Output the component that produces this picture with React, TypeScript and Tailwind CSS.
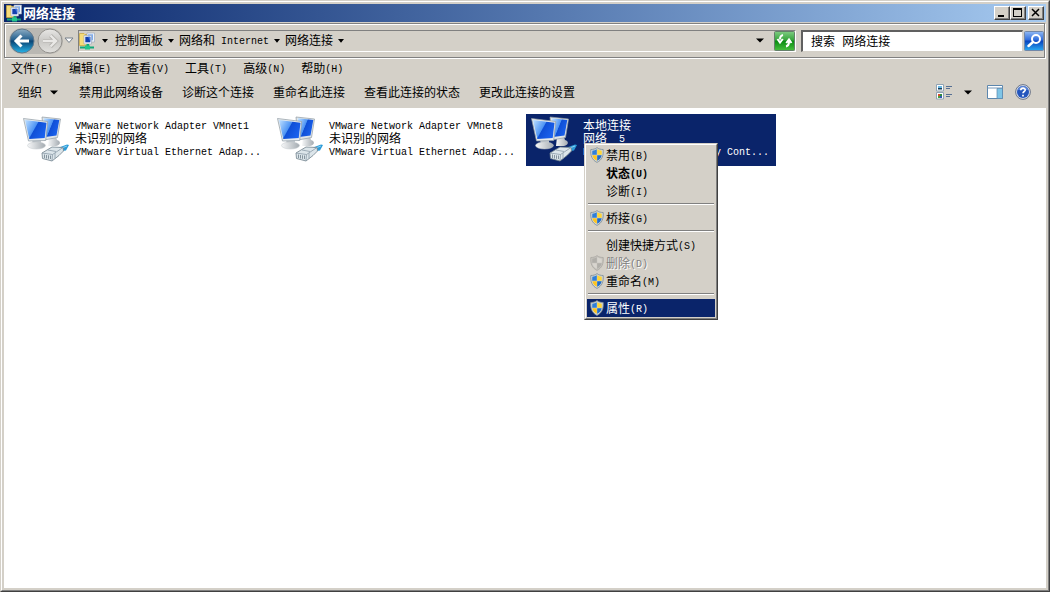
import React from 'react'

const menus = ['文件(F)', '编辑(E)', '查看(V)', '工具(T)', '高级(N)', '帮助(H)']
const commands = [
  '禁用此网络设备',
  '诊断这个连接',
  '重命名此连接',
  '查看此连接的状态',
  '更改此连接的设置',
]
const crumbs = ['控制面板', '网络和 Internet', '网络连接']
const adapters = [
  {
    name: 'VMware Network Adapter VMnet1',
    status: '未识别的网络',
    device: 'VMware Virtual Ethernet Adap...',
  },
  {
    name: 'VMware Network Adapter VMnet8',
    status: '未识别的网络',
    device: 'VMware Virtual Ethernet Adap...',
  },
  {
    name: '本地连接',
    status: '网络  5',
    device: 'Realtek PCIe GBE Family Cont...',
    selected: true,
  },
]
const contextMenu = [
  [
    { label: '禁用(B)', shield: true },
    { label: '状态(U)', bold: true },
    { label: '诊断(I)' },
  ],
  [{ label: '桥接(G)', shield: true }],
  [
    { label: '创建快捷方式(S)' },
    { label: '删除(D)', shield: true, disabled: true },
    { label: '重命名(M)', shield: true },
  ],
  [{ label: '属性(R)', shield: true, active: true }],
]

// Latin runs are half as wide as a Chinese character
const Label = ({ text }: { text: string }) => (
  <>
    {text.split(/([\x20-\x7e]+)/).map((part, i) =>
      i % 2 ? (
        <span
          key={i}
          className="align-[1px] whitespace-pre font-['Liberation_Mono',monospace] text-[10px] leading-none"
        >
          {part}
        </span>
      ) : (
        part
      ),
    )}
  </>
)

const SmallArrow = () => (
  <svg width="6" height="4" viewBox="0 0 6 4" className="shrink-0">
    <path d="M0 0h6L3 3.8z" />
  </svg>
)
const Arrow = () => (
  <svg width="8" height="5" viewBox="0 0 8 5" className="shrink-0">
    <path d="M0 0.5h8L4 4.5z" />
  </svg>
)

const FolderIcon = () => (
  <svg width="16" height="18" viewBox="0 0 16 18" className="shrink-0">
    <path d="M0.500 1.500h4.500l1 1h4v11H0.500z" fill="#f5dc7a" stroke="#c9a53c" strokeWidth="0.7" />
    <path d="M8 1h7.500v9H8z" fill="#eef3f8" stroke="#93a3b8" strokeWidth="0.6" />
    <path d="M9 2.300h5v6H9z" fill="#7dabef" />
    <path d="M5 3.500h7.500v8.500H5z" fill="#f5f8fc" stroke="#93a3b8" strokeWidth="0.6" />
    <path d="M6.300 4.800h5v5.500h-5z" fill="#123fae" />
    <path d="M9 4.800h2.300v5z" fill="#3c74de" />
    <path d="M7.500 12h2.500v2.500H15v2H1v-2h6.500z" fill="#13a878" />
    <path d="M6 13.500h5v4H6z" fill="#24c58d" />
  </svg>
)

const ShieldIcon = ({ disabled }: { disabled?: boolean }) => (
  <svg width="14" height="16" viewBox="0 0 14 16" className="shrink-0">
    <path
      d="M7 0.600C5.500 2 3 2.500 0.800 2.500C0.300 8.500 2 13 7 15.400C12 13 13.700 8.500 13.200 2.500C11 2.500 8.500 2 7 0.600z"
      fill={disabled ? '#c6c3bd' : '#cfd5d8'}
      stroke={disabled ? '#aaa7a2' : '#7c8a92'}
      strokeWidth="0.8"
    />
    <path d="M6.800 2.300C5.500 3.200 4 3.700 2.300 3.800L2.200 7.800h4.600z" fill={disabled ? '#b0aea9' : '#2f7fd8'} />
    <path d="M7.200 2.300C8.500 3.200 10 3.700 11.700 3.800L11.800 7.800H7.200z" fill={disabled ? '#d8d5cf' : '#ffd536'} />
    <path d="M2.300 8.200h4.500v5.500C4.300 12.500 2.800 10.700 2.300 8.200z" fill={disabled ? '#d8d5cf' : '#ffc51d'} />
    <path d="M11.700 8.200H7.200v5.500C9.700 12.500 11.200 10.700 11.700 8.200z" fill={disabled ? '#b0aea9' : '#1f6cc8'} />
  </svg>
)

const AdapterIcon = () => (
  <svg width="48" height="48" viewBox="0 0 48 48" className="shrink-0">
    <defs>
      <linearGradient id="screen" x1="0" y1="0.1" x2="1" y2="0.6">
        <stop offset="0" stopColor="#b9dcff" />
        <stop offset="0.48" stopColor="#4d94f4" />
        <stop offset="0.52" stopColor="#0f4fd6" />
        <stop offset="1" stopColor="#1b62ee" />
      </linearGradient>
      <linearGradient id="stand" x1="0" y1="0" x2="1" y2="0">
        <stop offset="0" stopColor="#f6f7f8" />
        <stop offset="1" stopColor="#a4abb1" />
      </linearGradient>
    </defs>
    <path d="M27 21h7l1 3c4 1 4 5-1 6h-8z" fill="url(#stand)" />
    <path d="M20 1L38.500 3L35.500 21.500L22 24z" fill="#dfe5e9" stroke="#8f9ba4" strokeWidth="0.7" />
    <path d="M22 2.200L37.300 4L34.500 19.500L23 21z" fill="url(#screen)" />
    <path d="M10 24l9-1v5h-8z" fill="#c3c9ce" />
    <ellipse cx="14.500" cy="29.500" rx="9" ry="3.500" fill="url(#stand)" stroke="#c3c8cc" strokeWidth="0.5" />
    <path d="M1.500 2.500L25.700 5.500L23.700 24.500L6.500 25z" fill="#e6ebee" stroke="#8f9ba4" strokeWidth="0.7" />
    <path d="M3 3.900L24.500 6.700L22.700 22L7.300 23z" fill="url(#screen)" />
    <path d="M37 31.500L45 28.500L47 29L44 34.500L40 35z" fill="#2c9bd8" />
    <path d="M37 33L45 30" stroke="#8ad3f4" />
    <path d="M20 37L30 31L41 31.500L41.500 35L37 39.500L30 45L20.500 42.500z" fill="#dce5ea" stroke="#71818c" strokeWidth="0.8" />
    <path d="M20 37L30.500 38.500L41 31.500M30.500 38.500L30 45M33 37v5.500M26 34l8 1.500" fill="none" stroke="#8b9ca8" strokeWidth="0.8" />
    <path d="M22.500 38.500v3.500M24.500 39v3.500M26.500 39.300v3.500M28.500 39.500v3.500" stroke="#6f7f8a" strokeWidth="0.8" />
  </svg>
)

const raised =
  'border border-t-white border-l-white border-r-[#404040] border-b-[#404040] shadow-[inset_-1px_-1px_0_#808080]'

const TitleBar = () => (
  <header className="flex h-[18px] items-center bg-linear-to-r from-[#0a246a] to-[#a6caf0] px-[2px]">
    <FolderIcon />
    <h1 className="flex-1 pl-px text-[13px] leading-[18px] font-bold text-white">网络连接</h1>
    <div className="flex">
      <button aria-label="最小化" className={`h-[14px] w-[16px] bg-[#d4d0c8] ${raised}`}>
        <svg width="14" height="12" viewBox="0 0 14 12">
          <path d="M3 8h6v2H3z" />
        </svg>
      </button>
      <button aria-label="最大化" className={`h-[14px] w-[16px] bg-[#d4d0c8] ${raised}`}>
        <svg width="14" height="12" viewBox="0 0 14 12">
          <path d="M2 1h9v9H2zM3 3v6h7V3z" fillRule="evenodd" />
        </svg>
      </button>
      <button aria-label="关闭" className={`ml-[2px] h-[14px] w-[16px] bg-[#d4d0c8] ${raised}`}>
        <svg width="14" height="12" viewBox="0 0 14 12">
          <path d="M3 2l7 7M10 2L3 9" stroke="#000" strokeWidth="1.5" />
        </svg>
      </button>
    </div>
  </header>
)

const NavButtons = () => (
  <div className="flex shrink-0 items-center">
    <div className="flex gap-[2px] rounded-full bg-[#bab8b3]">
      <button aria-label="后退">
        <svg width="26" height="26" viewBox="0 0 26 26">
          <defs>
            <linearGradient id="back" x1="0" y1="0" x2="0" y2="1">
              <stop offset="0" stopColor="#8dadc4" />
              <stop offset="0.45" stopColor="#245f8d" />
              <stop offset="0.5" stopColor="#0b4474" />
              <stop offset="1" stopColor="#27b5ea" />
            </linearGradient>
          </defs>
          <circle cx="13" cy="13" r="12" fill="url(#back)" stroke="#63788a" strokeWidth="1" />
          <path d="M20 13H7M12.500 7.500L7 13l5.500 5.500" fill="none" stroke="#fff" strokeWidth="3" />
        </svg>
      </button>
      <button aria-label="前进" disabled>
        <svg width="26" height="26" viewBox="0 0 26 26">
          <defs>
            <linearGradient id="forward" x1="0" y1="0" x2="0" y2="1">
              <stop offset="0" stopColor="#e8e7e5" />
              <stop offset="0.5" stopColor="#c9c8c5" />
              <stop offset="1" stopColor="#e2e1de" />
            </linearGradient>
          </defs>
          <circle cx="13" cy="13" r="12" fill="url(#forward)" stroke="#93918d" strokeWidth="1" />
          <path d="M6 13h13M13.500 7.500L19 13l-5.500 5.500" fill="none" stroke="#b2b0ac" strokeWidth="4" />
          <path d="M6 13h13M13.500 7.500L19 13l-5.500 5.500" fill="none" stroke="#e9e8e6" strokeWidth="2.400" />
        </svg>
      </button>
    </div>
    <button aria-label="最近的页面" className="pl-px">
      <svg width="10" height="7" viewBox="0 0 10 7">
        <path d="M1 1h8L5 5.500z" fill="#fff" stroke="#77808a" />
      </svg>
    </button>
  </div>
)

const AddressBar = () => (
  <nav className="mr-px flex h-[35px] items-center border border-[#808080] pl-1 shadow-[1px_1px_0_#fff,inset_1px_1px_0_#fff]">
    <NavButtons />
    <div className="ml-1 flex h-[22px] min-w-0 flex-1 items-center border border-t-[#808080] border-r-white border-b-white border-l-[#808080]">
      <FolderIcon />
      <button aria-label="位置" className="px-[7px]">
        <SmallArrow />
      </button>
      {crumbs.map((crumb) => (
        <React.Fragment key={crumb}>
          <a href="#" className="pb-[2px] whitespace-nowrap">
            <Label text={crumb} />
          </a>
          <button aria-label={`${crumb} 子项`} className="px-[5px]">
            <SmallArrow />
          </button>
        </React.Fragment>
      ))}
      <button aria-label="历史记录" className="mr-[10px] ml-auto">
        <Arrow />
      </button>
      <button aria-label="刷新">
        <svg width="21" height="20" viewBox="0 0 21 20">
          <defs>
            <linearGradient id="refresh" x1="0" y1="0" x2="0" y2="1">
              <stop offset="0" stopColor="#7fcc83" />
              <stop offset="0.45" stopColor="#35a53b" />
              <stop offset="0.5" stopColor="#078a10" />
              <stop offset="1" stopColor="#48c13e" />
            </linearGradient>
          </defs>
          <rect x="0.5" y="0.5" width="20" height="19" rx="1" fill="url(#refresh)" stroke="#64806a" />
          <path d="M9 4C6.500 4.500 6 6 6 8.500M3.500 8L6 11.500L8.800 8M12 15.500C14.500 15 15 13.500 15 11M12.200 12L15 8.500L17.500 12" fill="none" stroke="#fff" strokeWidth="2" />
        </svg>
      </button>
    </div>
    <form className="ml-[5px] flex w-[243px] items-center gap-px">
      <input
        type="text"
        aria-label="搜索"
        defaultValue="搜索 网络连接"
        className="h-[22px] min-w-0 flex-1 border-t-2 border-r border-b border-l-2 border-t-[#606060] border-r-[#d4d0c8] border-b-[#d4d0c8] border-l-[#606060] bg-white pb-px pl-[8px] font-['Liberation_Mono','Noto_Sans_CJK_SC',monospace] outline-none"
      />
      <button type="button" aria-label="开始搜索">
        <svg width="20" height="20" viewBox="0 0 20 20">
          <defs>
            <linearGradient id="search" x1="0" y1="0" x2="0" y2="1">
              <stop offset="0" stopColor="#91b9f3" />
              <stop offset="0.45" stopColor="#2c6bdc" />
              <stop offset="0.5" stopColor="#0742bd" />
              <stop offset="1" stopColor="#2aaaf2" />
            </linearGradient>
          </defs>
          <rect x="0.5" y="0.500" width="19" height="19" rx="1" fill="url(#search)" stroke="#7187a8" />
          <circle cx="12" cy="8" r="4" fill="none" stroke="#fff" strokeWidth="2" />
          <path d="M9 11l-4.500 4" stroke="#fff" strokeWidth="2.500" strokeLinecap="round" />
        </svg>
      </button>
    </form>
  </nav>
)

const Toolbar = () => (
  <div className="flex h-[30px] items-center gap-[19px] pr-[15px] pb-[2px] pl-[14px]">
    <button className="flex items-center gap-[8px] pr-[2px] whitespace-nowrap">
      组织
      <Arrow />
    </button>
    {commands.map((command) => (
      <button key={command} className="whitespace-nowrap">
        {command}
      </button>
    ))}
    <div className="ml-auto flex items-center">
      <button aria-label="更改视图">
        <svg width="16" height="16" viewBox="0 0 16 16">
          <path d="M0.500 0.500h7v6.500h-7zM0.500 8.500h7V15h-7z" fill="#fff" stroke="#8fa3b5" />
          <path d="M2 2h4v3H2z" fill="#67b7e4" />
          <path d="M2 4h4v1.500H2z" fill="#173c58" />
          <path d="M2 10h2v2H2z" fill="#d84c2b" />
          <path d="M4 10h2v2H4z" fill="#2d8b3d" />
          <path d="M2 12h2v2H2z" fill="#46a33e" />
          <path d="M4 12h2v2H4z" fill="#3157b4" />
          <path d="M10 2.500h6M10 4.500h4M10 10.500h6M10 12.500h4" stroke="#556f94" />
        </svg>
      </button>
      <button aria-label="更多选项" className="px-3">
        <Arrow />
      </button>
      <button aria-label="预览窗格" className="ml-[3px]">
        <svg width="16" height="14" viewBox="0 0 16 14">
          <path d="M0.500 0.500h15v13H0.500z" fill="#fff" stroke="#5c86ad" />
          <path d="M0.500 3h15" stroke="#7798b8" />
          <path d="M10 3.500h5.500v10H10z" fill="#7fc5e6" stroke="#5c86ad" strokeWidth="0.700" />
        </svg>
      </button>
      <button aria-label="帮助" className="ml-3">
        <svg width="16" height="16" viewBox="0 0 16 16">
          <circle cx="8" cy="8" r="7.400" fill="#d3dcec" stroke="#6d7587" />
          <circle cx="8" cy="8" r="6" fill="#2355bd" />
          <path d="M3 6a5 4 0 0 1 10 0z" fill="#5b84d6" />
          <path d="M5.800 6.300C5.800 3.400 10.300 3.500 10.200 6C10.100 7.500 8 7.600 8 9.300M8 10.800v1.700" fill="none" stroke="#fff" strokeWidth="1.700" />
        </svg>
      </button>
    </div>
  </div>
)

const ContextMenu = () => (
  <div
    role="menu"
    className="absolute top-[29px] left-[58px] z-10 w-[134px] border border-t-[#d4d0c8] border-r-[#404040] border-b-[#404040] border-l-[#d4d0c8] bg-[#d4d0c8] text-black"
  >
    <div className="border border-t-white border-r-[#808080] border-b-[#808080] border-l-white p-px">
      {contextMenu.map((group, i) => (
        <div key={i}>
          {i > 0 && (
            <div className="px-px pt-[3px] pb-[5px]">
              <hr className="h-px border-t border-[#808080] shadow-[0_1px_0_#fff]" />
            </div>
          )}
          {group.map((item) => (
            <button
              key={item.label}
              role="menuitem"
              disabled={item.disabled}
              className={`flex h-[18px] w-full items-center pl-[3px] leading-[18px] ${
                item.active ? 'bg-[#0a246a] text-white' : ''
              } ${item.bold ? 'font-bold' : ''} ${
                item.disabled ? 'text-[#808080] [text-shadow:1px_1px_0_#fff]' : ''
              }`}
            >
              <span className="flex w-[16px] shrink-0">
                {item.shield && <ShieldIcon disabled={item.disabled} />}
              </span>
              <span className="whitespace-nowrap">
                <Label text={item.label} />
              </span>
            </button>
          ))}
        </div>
      ))}
    </div>
  </div>
)

export default function App() {
  return (
    <div className="flex min-h-screen flex-col border border-t-[#d4d0c8] border-r-[#404040] border-b-[#404040] border-l-[#d4d0c8] bg-[#d4d0c8] font-['Noto_Sans_CJK_SC',sans-serif] text-[12px] leading-[16px] text-black">
      <div className="flex flex-1 flex-col border border-t-white border-r-[#808080] border-b-[#808080] border-l-white p-[2px]">
        <TitleBar />
        <div className="pt-px">
          <AddressBar />
        </div>
        <div className="flex h-[20px] items-center gap-[16px] pl-[7px]">
          {menus.map((menu) => (
            <button key={menu} className="whitespace-nowrap">
              <Label text={menu} />
            </button>
          ))}
        </div>
        <Toolbar />
        <main className="flex-1 bg-white pt-[6px] pl-[14px]">
          <ul className="flex flex-wrap gap-1">
            {adapters.map((adapter) => (
              <li key={adapter.name} className="relative w-[250px]">
                <button
                  className={`flex h-[52px] w-full items-start gap-[5px] pt-[2px] pl-1 text-left leading-[13px] ${
                    adapter.selected ? 'bg-[#0a246a] text-white' : ''
                  }`}
                >
                  <AdapterIcon />
                  <span className="min-w-0 pt-[2px] whitespace-nowrap">
                    <span className="block h-[13px]">
                      <Label text={adapter.name} />
                    </span>
                    <span className="block h-[13px]">
                      <Label text={adapter.status} />
                    </span>
                    <span className="block h-[13px]">
                      <Label text={adapter.device} />
                    </span>
                  </span>
                </button>
                {adapter.selected && <ContextMenu />}
              </li>
            ))}
          </ul>
        </main>
      </div>
    </div>
  )
}
